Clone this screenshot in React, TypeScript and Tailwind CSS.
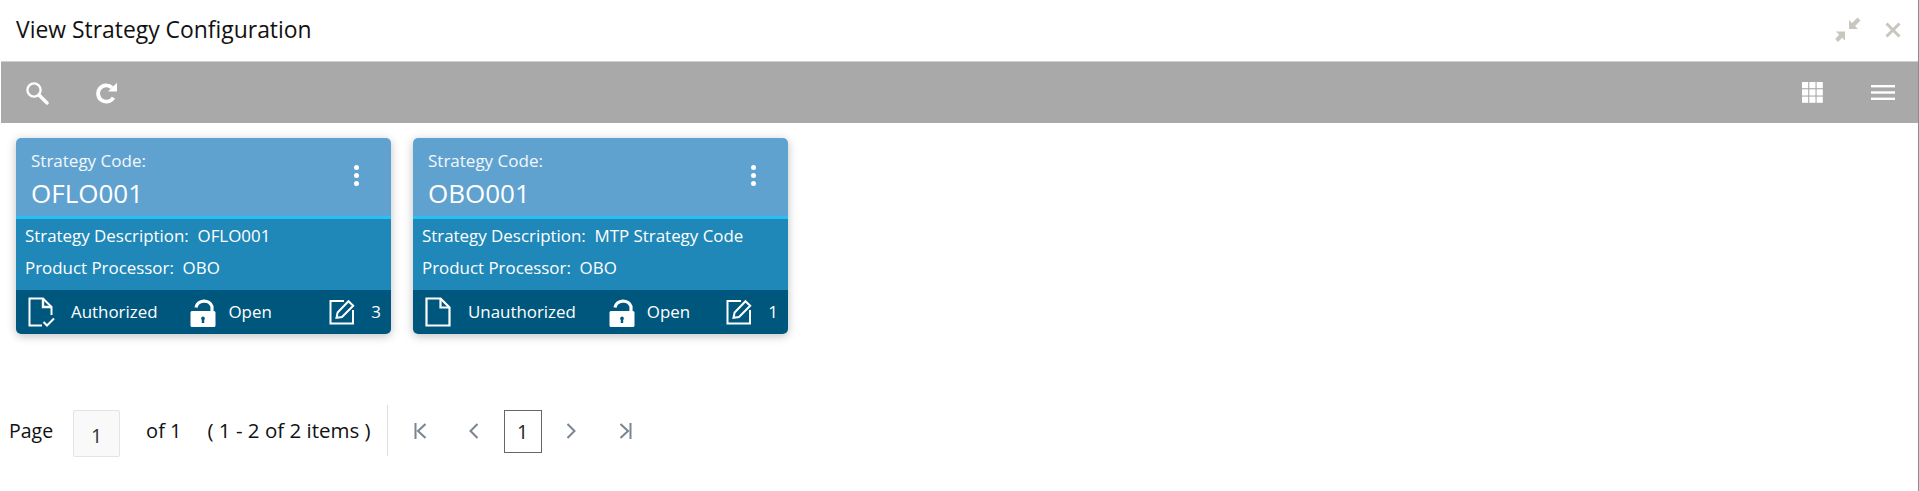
import React from 'react';

const font = { fontFamily: '"Open Sans", "Noto Sans", sans-serif' };

function SearchIcon() {
  return (
    <svg width="24" height="24" viewBox="0 0 24 24" fill="none" stroke="white">
      <circle cx="9" cy="9" r="6.6" strokeWidth="2.3" />
      <path d="M14 14 L22 22" strokeWidth="3.4" strokeLinecap="round" />
    </svg>
  );
}

function RefreshIcon() {
  return (
    <svg width="23" height="22" viewBox="0 0 23 22" fill="none">
      <path d="M18.4 15.6 A8.2 8.2 0 1 1 17 5.6" stroke="white" strokeWidth="3.8" />
      <path d="M13 9.6 L22 9.6 L22 0.8 Z" fill="white" />
    </svg>
  );
}

function CollapseIcon() {
  return (
    <svg width="26" height="25" viewBox="0 0 26 25" fill="#c9c5bf">
      <path d="M14 3 L14 12 L23 12 L20 9 L25.5 3.5 L22.5 0.5 L17 6 Z" />
      <path d="M1 14.5 L10 14.5 L10 23.5 L7.2 20.7 L3 25 L0.2 22 L4.2 17.8 Z" />
    </svg>
  );
}

function CloseIcon() {
  return (
    <svg width="16" height="16" viewBox="0 0 16 16" stroke="#c9c5bf" strokeWidth="3">
      <path d="M1.5 1.5 L14.5 14.5 M14.5 1.5 L1.5 14.5" />
    </svg>
  );
}

function GridIcon() {
  return (
    <svg width="21" height="21" viewBox="0 0 21 21" fill="white">
      {[0, 7.3, 14.6].map((x) =>
        [0, 7.3, 14.6].map((y) => <rect key={`${x}-${y}`} x={x} y={y} width="6.2" height="6.2" />),
      )}
    </svg>
  );
}

function MenuIcon() {
  return (
    <svg width="24" height="15" viewBox="0 0 24 15" fill="white">
      <rect x="0" y="0" width="24" height="2.4" />
      <rect x="0" y="6.3" width="24" height="2.4" />
      <rect x="0" y="12.6" width="24" height="2.4" />
    </svg>
  );
}

function DocCheckIcon() {
  return (
    <svg width="27" height="30" viewBox="0 0 27 30" fill="none" stroke="white" strokeWidth="2">
      <path d="M14 28.5 H1.5 V1.5 H15 L23.5 10 V18" />
      <path d="M15 1.5 V10 H23.5" strokeWidth="2.4" />
      <path d="M15.5 25 L19 28.5 L26 21.5" strokeWidth="2" />
    </svg>
  );
}

function DocIcon() {
  return (
    <svg width="27" height="30" viewBox="0 0 27 30" fill="none" stroke="white" strokeWidth="2.2">
      <path d="M1.5 1.5 H15.5 L24.5 10.5 V28.5 H1.5 Z" />
      <path d="M15.5 1.5 V10.5 H24.5" />
    </svg>
  );
}

function LockIcon() {
  return (
    <svg width="26" height="29" viewBox="0 0 26 29">
      <path d="M6 9.5 A8.2 7.5 0 0 1 22 8.5 V13" fill="none" stroke="white" strokeWidth="3.2" />
      <path
        d="M2 13 H24 A1.5 1.5 0 0 1 25.5 14.5 V27.5 A1.5 1.5 0 0 1 24 29 H2 A1.5 1.5 0 0 1 0.5 27.5 V14.5 A1.5 1.5 0 0 1 2 13 Z M13 18.5 A2 2 0 0 0 11.8 22 V25 H14.2 V22 A2 2 0 0 0 13 18.5 Z"
        fill="white"
        fillRule="evenodd"
      />
    </svg>
  );
}

function EditIcon() {
  return (
    <svg width="26" height="26" viewBox="0 0 26 26" fill="none" stroke="white" strokeWidth="2">
      <path d="M15 2 H1.5 V24.5 H24 V11" />
      <path d="M7.5 18.8 L8.6 13.5 L19.5 2.2 L24.2 6.8 L13 18 Z" />
    </svg>
  );
}

function Card({
  code,
  description,
  status,
  statusIcon,
  count,
}: {
  code: string;
  description: string;
  status: string;
  statusIcon: React.ReactNode;
  count: number;
}) {
  return (
    <div className="w-[375px] h-[196px] rounded-[5px] overflow-hidden text-white shadow-[0_2px_10px_rgba(0,0,0,0.25)] flex flex-col">
      <div className="h-[81px] bg-[#5fa2d0] border-b-[3px] border-[#25c0f4] flex justify-between pl-[15px] pr-[32px] shrink-0">
        <div>
          <div className="text-[17px] leading-[22px] mt-[12px] text-[#f3f8fc]">Strategy Code:</div>
          <div className="text-[26px] leading-[36px] mt-[3px]">{code}</div>
        </div>
        <div className="flex flex-col gap-[3px] mt-[27px]">
          <span className="w-[5px] h-[5px] rounded-full bg-white" />
          <span className="w-[5px] h-[5px] rounded-full bg-white" />
          <span className="w-[5px] h-[5px] rounded-full bg-white" />
        </div>
      </div>
      <div className="h-[71px] bg-[#1f88b8] px-[9px] pt-[1px] text-[16.9px] leading-[32px] shrink-0">
        <div>Strategy Description:&nbsp; {description}</div>
        <div>Product Processor:&nbsp; OBO</div>
      </div>
      <div className="flex-1 bg-[#00577d] flex items-center pl-[12px] pr-[10px] text-[16.9px]">
        {statusIcon}
        <span className="ml-[16px]">{status}</span>
        <span className="ml-[33px]">
          <LockIcon />
        </span>
        <span className="ml-[12px]">Open</span>
        <span className="ml-auto">
          <EditIcon />
        </span>
        <span className="ml-[16px]">{count}</span>
      </div>
    </div>
  );
}

export default function App() {
  return (
    <div className="w-[1919px] h-[491px] bg-white overflow-hidden flex flex-col border-r border-[#8c8c8c]" style={font}>
      <div className="h-[61px] flex items-center justify-between pl-[16px] pr-[17px] shrink-0">
        <h1 className="text-[22.9px] text-[#111] font-normal -mt-[1px]">View Strategy Configuration</h1>
        <div className="flex items-center gap-[24px] -mt-[2px]">
          <CollapseIcon />
          <CloseIcon />
        </div>
      </div>
      <div className="h-[62px] ml-[1px] bg-[#a9a9a9] border-t border-[#cfcfcf] flex items-center justify-between pl-[24px] pr-[23px] shrink-0">
        <div className="flex items-center gap-[46px]">
          <SearchIcon />
          <RefreshIcon />
        </div>
        <div className="flex items-center gap-[48px]">
          <GridIcon />
          <MenuIcon />
        </div>
      </div>
      <div className="flex gap-[22px] pl-[16px] pt-[15px]">
        <Card code="OFLO001" description="OFLO001" status="Authorized" statusIcon={<DocCheckIcon />} count={3} />
        <Card code="OBO001" description="MTP Strategy Code" status="Unauthorized" statusIcon={<DocIcon />} count={1} />
      </div>
      <div className="flex items-center mt-[70px] pl-[9px] text-[#111] text-[19.5px]">
        <span>Page</span>
        <span className="ml-[20px] mt-[6px] w-[47px] h-[47px] bg-[#f9f9f9] border border-[#e4e4e4] rounded-[2px] flex items-center justify-center text-[#333] pt-[4px]">
          1
        </span>
        <span className="ml-[26px] text-[20px]">of 1</span>
        <span className="ml-[26px] text-[20.5px]">( 1 - 2 of 2 items )</span>
        <div className="ml-[16px] w-px h-[51px] bg-[#dedede]" />
        <div className="flex items-center ml-[26px] text-[#7b8590]">
          <svg width="12" height="16" viewBox="0 0 12 16" fill="none" stroke="currentColor" strokeWidth="2">
            <path d="M1.5 0 V16 M11.5 1 L4 8 L11.5 15" />
          </svg>
          <svg className="ml-[43px]" width="9" height="16" viewBox="0 0 9 16" fill="none" stroke="currentColor" strokeWidth="2">
            <path d="M8.5 1 L1.5 8 L8.5 15" />
          </svg>
          <span className="ml-[26px] mt-[2px] w-[38px] h-[43px] border border-[#666] flex items-center justify-center text-[#222]">
            1
          </span>
          <svg className="ml-[25px]" width="9" height="16" viewBox="0 0 9 16" fill="none" stroke="currentColor" strokeWidth="2">
            <path d="M0.5 1 L7.5 8 L0.5 15" />
          </svg>
          <svg className="ml-[44px]" width="12" height="16" viewBox="0 0 12 16" fill="none" stroke="currentColor" strokeWidth="2">
            <path d="M10.5 0 V16 M0.5 1 L8 8 L0.5 15" />
          </svg>
        </div>
      </div>
    </div>
  );
}
